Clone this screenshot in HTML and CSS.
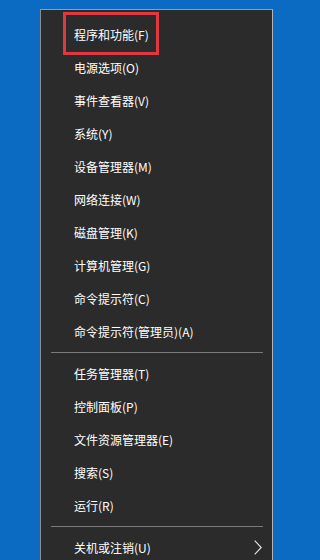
FILE: index.html
```html
<!DOCTYPE html>
<html lang="zh-CN">
<head>
<meta charset="utf-8">
<link rel="stylesheet" href="styles.css">
</head>
<body>
<div class="menu">
  <div class="highlight"></div>
  <div class="item">程序和功能(F)</div>
  <div class="item">电源选项(O)</div>
  <div class="item">事件查看器(V)</div>
  <div class="item">系统(Y)</div>
  <div class="item">设备管理器(M)</div>
  <div class="item">网络连接(W)</div>
  <div class="item">磁盘管理(K)</div>
  <div class="item">计算机管理(G)</div>
  <div class="item">命令提示符(C)</div>
  <div class="item">命令提示符(管理员)(A)</div>
  <div class="sep"></div>
  <div class="item">任务管理器(T)</div>
  <div class="item">控制面板(P)</div>
  <div class="item">文件资源管理器(E)</div>
  <div class="item">搜索(S)</div>
  <div class="item">运行(R)</div>
  <div class="sep"></div>
  <div class="item sub">关机或注销(U)
    <svg class="chev" width="8" height="15" viewBox="0 0 8 15"><polyline points="0.7,0.7 7.2,7.5 0.7,14.3" fill="none" stroke="#e8e8e8" stroke-width="1.1"/></svg>
  </div>
</div>
</body>
</html>
```
FILE: styles.css
```css
html, body {
  margin: 0;
  padding: 0;
}
body {
  background: #0b6ac2;
  width: 305px;
  height: 560px;
  overflow: hidden;
  font-family: "Noto Sans CJK SC", "Noto Sans", sans-serif;
}
.menu {
  position: relative;
  margin: 9px 0 0 40px;
  width: 231px;
  background: #2b2b2b;
  border: 1px solid #8c8c8c;
  border-right-color: #b4b4b4;
  border-top-color: #9a9a9a;
  padding-top: 8px;
}
.item {
  position: relative;
  height: 33px;
  line-height: 33px;
  padding-left: 33px;
  font-size: 12px;
  color: #ffffff;
  white-space: nowrap;
}
.sep {
  height: 1px;
  background: #7a7a7a;
  margin: 4px 9px 4px 10px;
}
.chev {
  position: absolute;
  right: 10px;
  top: 9px;
}
.highlight {
  position: absolute;
  left: 22px;
  top: 2px;
  width: 96px;
  height: 43px;
  box-sizing: border-box;
  border: 3px solid #e0383e;
}
```
